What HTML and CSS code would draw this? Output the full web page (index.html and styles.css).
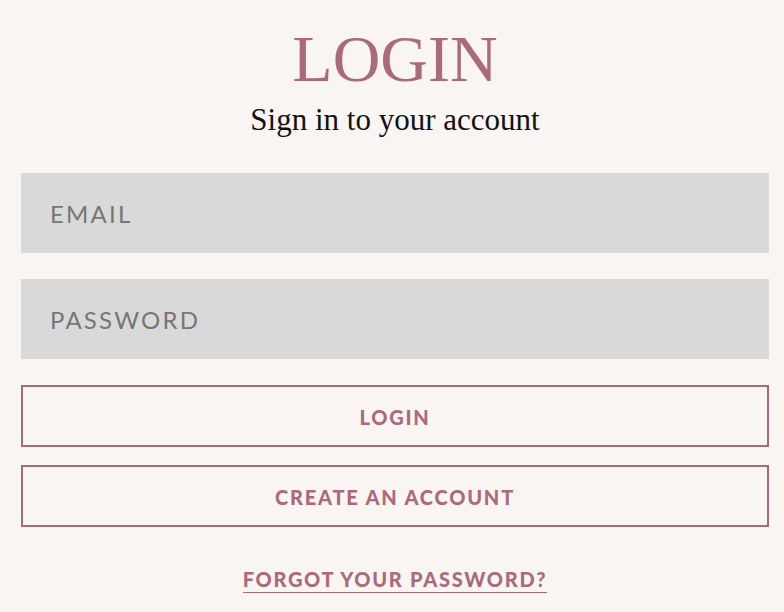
FILE: index.html
```html
<!DOCTYPE html>
<html lang="en">
<head>
<meta charset="utf-8">
<title>Login</title>
<link rel="stylesheet" href="styles.css">
</head>
<body>
<main class="page">
  <h1 class="title">LOGIN</h1>
  <p class="subtitle">Sign in to your account</p>
  <form class="form">
    <input class="field" type="email" placeholder="EMAIL">
    <input class="field field-gap" type="password" placeholder="PASSWORD">
    <button class="btn btn-login" type="button">LOGIN</button>
    <button class="btn btn-create" type="button">CREATE AN ACCOUNT</button>
  </form>
  <a class="forgot" href="#">FORGOT YOUR PASSWORD?</a>
</main>
</body>
</html>
```

FILE: styles.css
```css
html, body {
  margin: 0;
  padding: 0;
  background: #f9f5f2;
}

.page {
  display: flex;
  flex-direction: column;
  align-items: center;
  padding: 26px 15px 0 21px;
}

.title {
  margin: 0;
  font-family: "Liberation Serif", "Times New Roman", serif;
  font-weight: normal;
  font-size: 66px;
  line-height: 66px;
  color: #ab6a7b;
}

.subtitle {
  margin: 10px 0 0;
  font-family: "Liberation Serif", "Times New Roman", serif;
  font-size: 31px;
  line-height: 36px;
  color: #111;
}

.form {
  align-self: stretch;
  display: flex;
  flex-direction: column;
  margin-top: 35px;
}

.field {
  box-sizing: border-box;
  height: 80px;
  border: 0;
  margin: 0;
  padding: 0 0 0 29px;
  background: #d9d9d9;
  font-family: "Lato", sans-serif;
  font-size: 24px;
  letter-spacing: 2.2px;
  color: #555;
  outline: none;
}

.field::placeholder {
  color: #767676;
  opacity: 1;
}

.field-gap {
  margin-top: 26px;
}

.btn {
  box-sizing: border-box;
  height: 62px;
  margin: 0;
  padding: 2px 0 0;
  border: 2px solid #a8697a;
  background: transparent;
  font-family: "Lato", sans-serif;
  font-weight: 900;
  font-size: 20px;
  letter-spacing: 1.8px;
  color: #ab6a7b;
  cursor: pointer;
}

.btn-login {
  margin-top: 26px;
}

.btn-create {
  margin-top: 18px;
}

.forgot {
  display: inline-block;
  margin-top: 40px;
  padding-bottom: 1px;
  font-family: "Lato", sans-serif;
  font-weight: 900;
  font-size: 20px;
  line-height: 24px;
  letter-spacing: 1.7px;
  color: #ab6a7b;
  text-decoration: none;
  border-bottom: 1px solid #ab6a7b;
}
```
